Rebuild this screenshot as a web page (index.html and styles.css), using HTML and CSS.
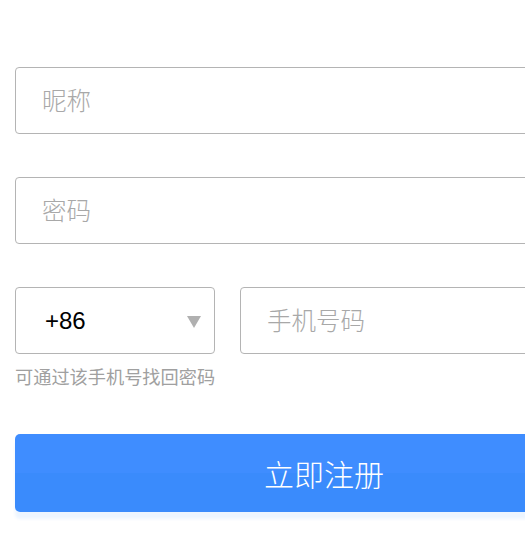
FILE: index.html
```html
<!DOCTYPE html>
<html lang="zh-CN">
<head>
<meta charset="utf-8">
<title>注册</title>
<link rel="stylesheet" href="styles.css">
</head>
<body>
<div class="page">
  <form class="form">
    <div class="field field-first"><span class="placeholder">昵称</span></div>
    <div class="field"><span class="placeholder">密码</span></div>
    <div class="phone-row">
      <div class="select">
        <span class="code">+86</span>
        <span class="caret"></span>
      </div>
      <div class="field phone"><span class="placeholder">手机号码</span></div>
    </div>
    <p class="hint">可通过该手机号找回密码</p>
    <div class="submit">立即注册</div>
  </form>
</div>
</body>
</html>
```

FILE: styles.css
```css
html, body {
  margin: 0;
  padding: 0;
  background: #fff;
}

.page {
  width: 100vw;
  height: 100vh;
  overflow: hidden;
}

.form {
  width: 618px;
  margin: 0;
  padding: 67px 0 0 15px;
  font-family: "Noto Sans CJK SC", "Liberation Sans", sans-serif;
}

.field {
  box-sizing: border-box;
  height: 67px;
  margin-top: 43px;
  border: 1px solid #b4b4b4;
  border-radius: 4px;
  padding-left: 26px;
  display: flex;
  align-items: center;
}

.field-first {
  margin-top: 0;
}

.placeholder {
  font-size: 24.5px;
  font-weight: 300;
  color: #a8a8a8;
  line-height: 1;
}

.phone-row {
  display: flex;
  gap: 25px;
  margin-top: 43px;
}

.phone-row .field {
  margin-top: 0;
  flex: 1;
}

.select {
  box-sizing: border-box;
  width: 200px;
  height: 67px;
  border: 1px solid #b4b4b4;
  border-radius: 4px;
  padding: 0 13px 0 29px;
  display: flex;
  align-items: center;
  justify-content: space-between;
}

.code {
  font-family: "Liberation Sans", Arial, sans-serif;
  font-size: 24px;
  color: #000;
}

.caret {
  width: 0;
  height: 0;
  border-left: 7.5px solid transparent;
  border-right: 7.5px solid transparent;
  border-top: 12px solid #b0b0b0;
  margin-top: 2px;
}

.hint {
  margin: 12px 0 0;
  font-size: 18.2px;
  line-height: 20px;
  color: #a0a0a0;
}

.submit {
  margin-top: 48px;
  height: 78px;
  border-radius: 5px;
  background: linear-gradient(#3f8dff 50%, #3a8bfc 50%);
  box-shadow: 0 7px 3px rgba(60, 140, 255, 0.09);
  color: #fff;
  font-size: 30px;
  font-weight: 300;
  display: flex;
  align-items: center;
  justify-content: center;
}
```
